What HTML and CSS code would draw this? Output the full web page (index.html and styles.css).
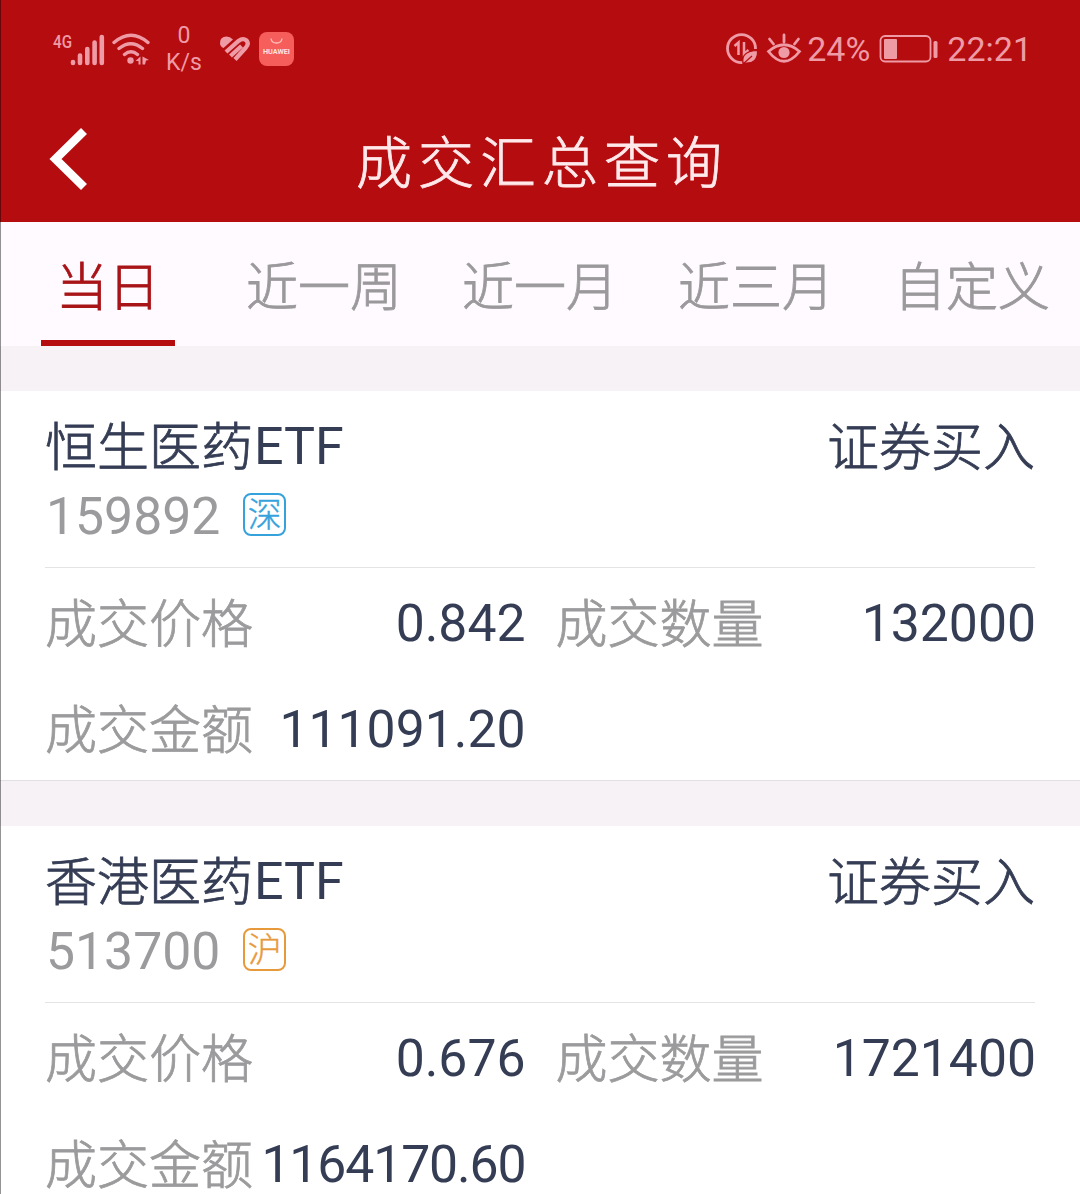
FILE: index.html
```html
<!DOCTYPE html>
<html lang="zh-CN">
<head>
  <meta charset="UTF-8" />
  <meta name="viewport" content="width=device-width, initial-scale=1.0" />
  <title>成交汇总查询</title>
  <link rel="stylesheet" href="styles.css">
</head>
<body>
  <div class="top">
    <div class="status-bar">
      <div class="status-left">
        <svg class="signal" width="52" height="36" viewBox="0 -2 52 36">
          <text class="net" x="0" y="15" textLength="19" lengthAdjust="spacingAndGlyphs">4G</text>
          <path d="M20 29v1M27 22.500v7.500M34.300 16v14M41.600 9.500v20.500M48.800 4v26" />
        </svg>
        <svg class="wifi" width="38" height="34" viewBox="0 0 38 34">
          <path d="M2 10.500Q19 -4 36 10.500M7 16.500Q19 7 30.500 16.500M12.500 22.500Q19 17 25.500 22.500" />
          <circle cx="18.500" cy="28.500" r="3.200" />
          <path class="fill" d="M23.500 29l5-4.500v8h-2v-3.500zM30.500 24.500l6.500 3.500-3 .5-1 4h-2.500z" />
        </svg>
        <div class="speed"><span>0</span><span>K/s</span></div>
        <svg class="heart" width="32" height="28" viewBox="0 0 32 28">
          <path d="M7 17L19.500 6Q24 2.500 27.500 5.500Q30.500 9 26.500 13L16 24.500M11.500 21L22.500 11" />
          <path class="fill" d="M1 8Q1 1.500 7.500 1.500Q11 1.500 14 4.500L4.500 13Q1 11.500 1 8z" />
        </svg>
        <svg class="huawei" width="35" height="34" viewBox="0 0 35 34">
          <rect width="35" height="34" rx="8" />
          <path d="M12 6.500Q12.500 11 17.500 11T23 6.500" />
          <text x="4" y="22" textLength="27" lengthAdjust="spacingAndGlyphs">HUAWEI</text>
        </svg>
      </div>
      <div class="status-right">
        <svg class="data-saver" width="34" height="34" viewBox="0 0 34 34">
          <path d="M17.500 30.500A14 14 0 1 1 30.500 17" />
          <path class="arrows" d="M9.500 14l4-3.500v12.500M19 10v12l4.500-4" />
          <path class="leaf" d="M18 31Q16 19 32.500 18.500Q33 32 20 31z" />
          <path class="vein" d="M18 32l9-8" />
        </svg>
        <svg class="eye" width="36" height="32" viewBox="0 0 36 32">
          <path d="M2.500 18.500Q18 5 33.500 18.500Q18 38 2.500 18.500zM18 2v7M3.500 6l4 5M32.500 6l-4 5" />
          <circle cx="18" cy="19.500" r="5.600" />
        </svg>
        <span class="percent">24%</span>
        <svg class="battery" width="59" height="30" viewBox="0 0 59 30">
          <rect class="case" x="1.500" y="2" width="50" height="25.500" rx="4.500" />
          <rect x="5" y="5" width="13" height="20" rx="1" />
          <rect x="54.500" y="7" width="4" height="17" rx="1.500" />
        </svg>
        <span class="clock">22:21</span>
      </div>
    </div>
    <div class="title-bar">
      <svg class="back" width="40" height="64" viewBox="0 0 40 64">
        <path d="M36 4L7.500 32L36 60" />
      </svg>
      <h1>成交汇总查询</h1>
    </div>
  </div>

  <div class="tabs">
    <div class="tab active">当日</div>
    <div class="tab">近一周</div>
    <div class="tab">近一月</div>
    <div class="tab">近三月</div>
    <div class="tab">自定义</div>
  </div>

  <div class="card">
    <div class="card-head">
      <div class="line"><span>恒生医药</span><b>ETF</b><span class="side">证券买入</span></div>
      <div class="code"><b>159892</b><span class="market sz">深</span></div>
    </div>
    <div class="fields">
      <div class="field"><label>成交价格</label><b>0.842</b></div>
      <div class="field"><label>成交数量</label><b>132000</b></div>
      <div class="field"><label>成交金额</label><b>111091.20</b></div>
    </div>
  </div>

  <div class="card">
    <div class="card-head">
      <div class="line"><span>香港医药</span><b>ETF</b><span class="side">证券买入</span></div>
      <div class="code"><b>513700</b><span class="market sh">沪</span></div>
    </div>
    <div class="fields">
      <div class="field"><label>成交价格</label><b>0.676</b></div>
      <div class="field"><label>成交数量</label><b>1721400</b></div>
      <div class="field"><label>成交金额</label><b class="long">1164170.60</b></div>
    </div>
  </div>
</body>
</html>
```
FILE: styles.css
```css
* {
  box-sizing: border-box;
}
body {
  margin: 0;
  height: 1194px;
  overflow: hidden;
  background: #f6f2f6;
  font-family: Roboto, "Noto Sans CJK SC", sans-serif;
  font-size: 52px;
  font-weight: 300;
  color: #353d55;
}
/* thin line down the left edge of the screen */
body::before {
  content: '';
  position: absolute;
  left: 0;
  top: 0;
  width: 1px;
  height: 1194px;
  background: rgba(0, 0, 0, 0.42);
  z-index: 1;
}
b {
  font-weight: 400;
}
/* light CJK strokes come out too thin, fatten them a little */
h1,
.tab,
.line span,
.field label,
.market {
  -webkit-text-stroke: 0.8px currentColor;
}
svg {
  display: block;
  flex: none;
}
.top {
  height: 222px;
  background: #b50c10;
}

/* status bar */
.status-bar {
  height: 98px;
  padding: 0 48px 0 53px;
  display: flex;
  justify-content: space-between;
  align-items: center;
  color: #ee9ba5;
}
.status-left,
.status-right {
  display: flex;
  align-items: center;
}
.status-bar svg {
  fill: none;
  stroke: #ee9ba5;
}
.signal {
  stroke-width: 4.6;
  stroke-linecap: round;
}
.signal .net {
  font-size: 19px;
  font-weight: 500;
  fill: #ee9ba5;
  stroke: none;
}
.wifi {
  margin-left: 7px;
  stroke-width: 3.4;
  stroke-linecap: round;
}
.wifi circle,
.wifi .fill,
.heart .fill {
  fill: #ee9ba5;
  stroke: none;
}
.speed {
  width: 36px;
  margin-left: 16px;
  display: flex;
  flex-direction: column;
  align-items: center;
  font-size: 23px;
  font-weight: 400;
  line-height: 27px;
}
.heart {
  margin-left: 17px;
  stroke-width: 4.3;
}
.huawei {
  margin-left: 8px;
}
.huawei rect {
  fill: #f65e5c;
  stroke: none;
}
.huawei path {
  stroke: #ffc4bd;
  stroke-width: 1.3;
}
.huawei text {
  font-size: 7px;
  font-weight: 700;
  fill: #ffe3df;
  stroke: none;
}
.data-saver {
  stroke-width: 2.8;
}
.data-saver .arrows {
  stroke-width: 2.5;
}
.data-saver .leaf {
  fill: #ee9ba5;
  stroke: #b50c10;
  stroke-width: 1.2;
}
.data-saver .vein {
  stroke: #b50c10;
  stroke-width: 1.1;
}
.eye {
  margin-left: 7px;
  stroke-width: 2.8;
  stroke-linecap: round;
}
.eye circle,
.battery rect {
  fill: #ee9ba5;
  stroke: none;
}
.percent,
.clock {
  font-size: 34px;
  font-weight: 400;
}
.percent {
  margin-left: 5px;
}
.battery {
  margin-left: 9px;
}
.battery .case {
  fill: none;
  stroke: #ee9ba5;
  stroke-width: 1.8;
}
.clock {
  margin-left: 9px;
}

/* title */
.title-bar {
  height: 121px;
  padding-left: 48px;
  display: flex;
  align-items: center;
}
.back {
  fill: none;
  stroke: #fff;
  stroke-width: 8.5;
}
h1 {
  margin: 0 84px 0 0;
  flex: 1;
  text-align: center;
  font-size: 56px;
  font-weight: 300;
  letter-spacing: 6px;
  color: #ffe9eb;
}

/* tabs */
.tabs {
  height: 124px;
  display: grid;
  grid-template-columns: repeat(5, 1fr);
  background: #fefaff;
  color: #9b999b;
}
.tab {
  line-height: 134px;
  text-align: center;
}
.tab.active {
  width: 134px;
  height: 124px;
  margin-left: 41px;
  border-bottom: 6px solid #b50c10;
  color: #a81418;
}

/* deal cards */
.card {
  height: 390px;
  margin-top: 45px;
  padding: 0 45px;
  background: #fff;
  border-bottom: 1px solid #e3e0e3;
}
.card-head {
  height: 177px;
  padding-top: 20px;
  border-bottom: 1px solid #e4e4e6;
}
.line {
  height: 70px;
  display: flex;
  line-height: 71px;
}
.line span {
  line-height: 75px;
}
.line b {
  margin-left: 1px;
}
.line .side {
  margin-left: auto;
}
.code {
  display: flex;
  align-items: center;
  line-height: 71px;
  color: #9b9b9d;
}
.code b,
.field b {
  font-size: 51.7px;
}
.code b {
  margin-left: 1px;
}
.market {
  width: 43px;
  height: 43px;
  margin: 0 0 4px 23px;
  border: 2px solid;
  border-radius: 8px;
  font-size: 34px;
  line-height: 40px;
  text-align: center;
  -webkit-text-stroke-width: 0.4px;
}
.sz {
  color: #35a2dc;
}
.sh {
  color: #e79a3c;
}
.fields {
  padding-top: 2px;
  display: grid;
  grid-template-columns: repeat(2, minmax(0, 1fr));
  column-gap: 31px;
}
.field {
  height: 106px;
  display: flex;
  justify-content: space-between;
  line-height: 107px;
  white-space: nowrap;
}
.field label {
  line-height: 111px;
  color: #9b9b9d;
}
.field b {
  margin-right: -1px;
}
.field .long {
  letter-spacing: -1.1px;
}
```
